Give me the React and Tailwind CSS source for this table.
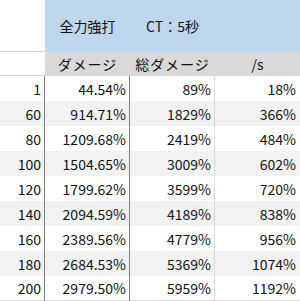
const rows = [
  ["1", "44.54%", "89%", "18%"],
  ["60", "914.71%", "1829%", "366%"],
  ["80", "1209.68%", "2419%", "484%"],
  ["100", "1504.65%", "3009%", "602%"],
  ["120", "1799.62%", "3599%", "720%"],
  ["140", "2094.59%", "4189%", "838%"],
  ["160", "2389.56%", "4779%", "956%"],
  ["180", "2684.53%", "5369%", "1074%"],
  ["200", "2979.50%", "5959%", "1192%"],
];

export default function App() {
  return (
    <div
      className="w-[300px] h-[301px] bg-white text-[14px] text-[#111] leading-none overflow-hidden"
      style={{ fontFamily: '"Noto Sans CJK JP", "Noto Sans", sans-serif' }}
    >
      <div className="grid grid-cols-[45px_85px_85px_85px]">
        {/* header row 1 */}
        <div className="h-[52px] border-b border-[#d4d4d4] bg-white" />
        <div className="h-[52px] bg-[#bdd7ee] flex items-center justify-center">全力強打</div>
        <div className="h-[52px] bg-[#bdd7ee] flex items-center justify-center">CT：5秒</div>
        <div className="h-[52px] bg-[#bdd7ee]" />
        {/* header row 2 */}
        <div className="h-[24px] border-b border-[#d4d4d4] bg-white" />
        <div className="h-[24px] bg-[#d9d9d9] flex items-center justify-center tracking-[1px]">ダメージ</div>
        <div className="h-[24px] bg-[#d9d9d9] flex items-center justify-center tracking-[1px]">総ダメージ</div>
        <div className="h-[24px] bg-[#d9d9d9] flex items-center justify-center">/s</div>
        {/* data */}
        {rows.map((r, i) => {
          const bg = i % 2 === 1 ? "bg-[#f2f2f2]" : "bg-white";
          const last = i === rows.length - 1 ? "border-b border-[#d4d4d4]" : "";
          return [
            <div key={i + "a"} className={`h-[25px] ${bg} ${last} border-r border-r-[#7f7f7f] flex items-center justify-end pr-[3px]`}>{r[0]}</div>,
            <div key={i + "b"} className={`h-[25px] ${bg} ${last} border-r border-r-[#7f7f7f] flex items-center justify-end pr-[3px]`}>{r[1]}</div>,
            <div key={i + "c"} className={`h-[25px] ${bg} ${last} border-r border-r-[#d9d9d9] flex items-center justify-end pr-[3px]`}>{r[2]}</div>,
            <div key={i + "d"} className={`h-[25px] ${bg} ${last} flex items-center justify-end pr-[4px]`}>{r[3]}</div>,
          ];
        })}
      </div>
    </div>
  );
}
